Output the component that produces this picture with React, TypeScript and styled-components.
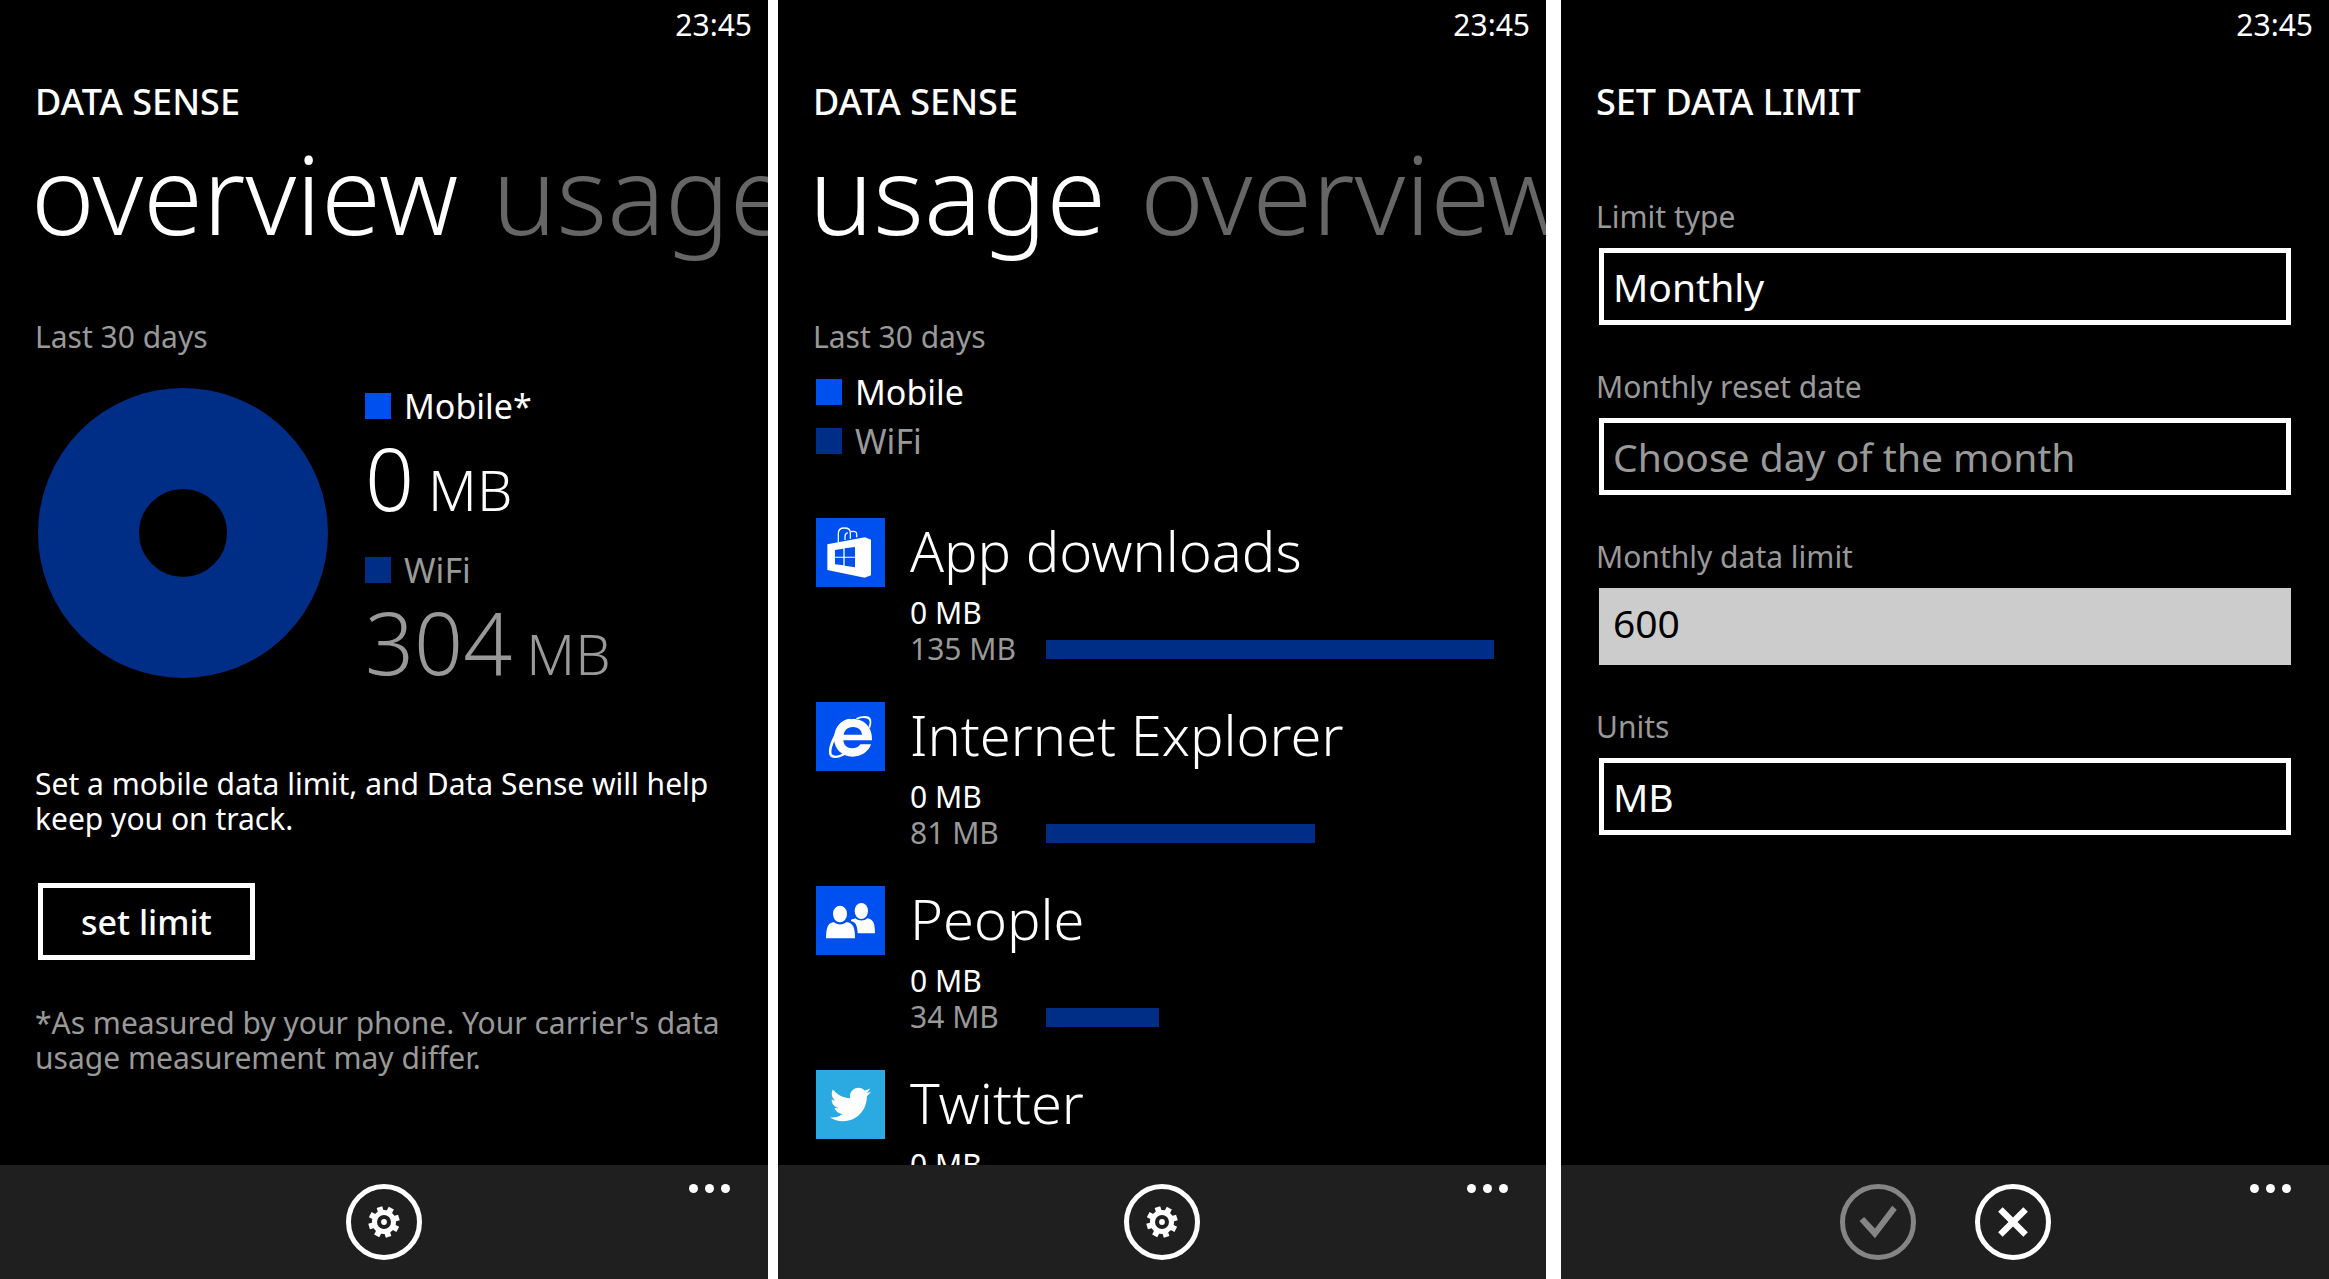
import React from 'react';
import styled, { createGlobalStyle } from 'styled-components';
import { FaTwitter } from 'react-icons/fa';

const GlobalStyle = createGlobalStyle`
  *, *::before, *::after { box-sizing: border-box; }
  html, body { margin: 0; padding: 0; background: #fff; }
  body { font-family: 'Noto Sans', 'Open Sans', sans-serif; color: #fff; }
  h1, h2, h3, p, ul, dl, dd, dt { margin: 0; padding: 0; font-weight: 400; }
  button, input, select { font-family: inherit; color: inherit; }
`;

const color = {
  text: '#ffffff',
  subtle: '#999999',
  faded: '#666666',
  accent: '#0050ef',
  accentDark: '#002d86',
  twitter: '#2ba9e1',
  bar: '#1f1f1f',
  field: '#cccccc',
};

/* ---------- page and phone ---------- */

const Page = styled.main`
  display: grid;
  grid-template-columns: 1fr 10px 1fr 15px 1fr;
  height: 100vh;
`;

const Phone = styled.section<{ $column: number }>`
  grid-column: ${(p) => p.$column};
  display: flex;
  flex-direction: column;
  min-width: 0;
  min-height: 0;
  overflow: hidden;
  background: #000;
`;

const Status = styled.div`
  flex: none;
  padding-right: 16px;
  text-align: right;
  font-size: 30px;
  line-height: 50px;
`;

const Content = styled.div`
  flex: 1;
  min-height: 0;
  overflow: hidden;
  padding: 28px 0 0 35px;
`;

const Title = styled.h1`
  font-size: 36px;
  line-height: 48px;
  font-weight: 500;
`;

const Pivot = styled.nav`
  display: flex;
  gap: 34px;
  margin: 8px 0 65px -4px;
`;

const PivotItem = styled.button<{ $active?: boolean }>`
  flex: none;
  padding: 0;
  border: 0;
  background: none;
  font-size: 108px;
  line-height: 120px;
  font-weight: 350;
  color: ${(p) => (p.$active ? color.text : color.faded)};
`;

const Text = styled.p<{ $subtle?: boolean }>`
  font-size: 30px;
  line-height: 35px;
  color: ${(p) => (p.$subtle ? color.subtle : color.text)};
`;

const Period = styled(Text)`
  line-height: 36px;
`;

/* ---------- app bar ---------- */

const Bar = styled.footer`
  flex: none;
  display: grid;
  grid-template-columns: 1fr auto 1fr;
  height: 114px;
  padding: 19px 38px;
  background: ${color.bar};
`;

const BarActions = styled.div`
  grid-column: 2;
  display: flex;
  gap: 59px;
`;

const RoundButton = styled.button`
  display: flex;
  align-items: center;
  justify-content: center;
  width: 76px;
  height: 76px;
  padding: 0;
  border: 5px solid currentColor;
  border-radius: 50%;
  background: none;
  color: #fff;

  &:disabled { color: #858585; }
`;

const MoreButton = styled.button`
  justify-self: end;
  align-self: start;
  display: flex;
  gap: 7px;
  padding: 0;
  border: 0;
  background: none;
`;

const Dot = styled.span`
  width: 9px;
  height: 9px;
  border-radius: 50%;
  background: #fff;
`;

function AppBar({ children }: { children: React.ReactNode }) {
  return (
    <Bar>
      <BarActions>{children}</BarActions>
      <MoreButton type="button" aria-label="More">
        <Dot />
        <Dot />
        <Dot />
      </MoreButton>
    </Bar>
  );
}

function GearIcon() {
  return (
    <svg width="34" height="34" viewBox="-17 -17 34 34" fill="none" stroke="#fff" aria-hidden="true">
      <circle r="9.5" strokeWidth="5" />
      {[0, 1, 2, 3, 4, 5, 6, 7].map((n) => (
        <line key={n} x1="10" x2="15.6" y1="0" y2="0" strokeWidth="5.8" transform={`rotate(${n * 45 - 17})`} />
      ))}
      <circle r="2.9" fill="#fff" stroke="none" />
    </svg>
  );
}

function CheckIcon() {
  return (
    <svg width="40" height="40" viewBox="-20 -20 40 40" fill="currentColor" aria-hidden="true">
      <path d="M-18.5-1-13.9-5-3 6.5 14.2-16.3 18.8-12.3-3 16.3Z" />
    </svg>
  );
}

function CloseIcon() {
  return (
    <svg width="40" height="40" viewBox="-20 -20 40 40" stroke="currentColor" strokeWidth="6.4" aria-hidden="true">
      <path d="M-12.6-12.6 12.6 12.6M12.6-12.6-12.6 12.6" />
    </svg>
  );
}

const SettingsButton = () => (
  <RoundButton type="button" aria-label="Settings">
    <GearIcon />
  </RoundButton>
);

/* ---------- legend ---------- */

const Legend = styled.div<{ $subtle?: boolean }>`
  display: flex;
  align-items: center;
  gap: 13px;
  font-size: 34px;
  line-height: 36px;
  color: ${(p) => (p.$subtle ? color.subtle : color.text)};
`;

const Swatch = styled.span<{ $dark?: boolean }>`
  width: 26px;
  height: 26px;
  background: ${(p) => (p.$dark ? color.accentDark : color.accent)};
`;

/* ---------- overview ---------- */

const Summary = styled.div`
  display: flex;
  gap: 37px;
  margin: 33px 0 82px;
  padding-left: 3px;
`;

const Totals = styled.div`
  display: flex;
  flex-direction: column;
  gap: 32px;
`;

const Amount = styled.p<{ $subtle?: boolean }>`
  margin-top: 12px;
  font-size: 86px;
  line-height: 84px;
  font-weight: 300;
  white-space: nowrap;
  color: ${(p) => (p.$subtle ? color.subtle : color.text)};
`;

const Unit = styled.span`
  margin-left: 14px;
  font-size: 56px;
  line-height: 1;
`;

const OutlineButton = styled.button`
  display: block;
  height: 77px;
  margin: 47px 0 45px 3px;
  padding: 0 38px;
  border: 5px solid #fff;
  background: none;
  font-size: 34px;
  font-weight: 500;
`;

function Overview() {
  return (
    <Phone $column={1}>
      <Status>23:45</Status>
      <Content>
        <Title>DATA SENSE</Title>
        <Pivot>
          <PivotItem type="button" $active>overview</PivotItem>
          <PivotItem type="button">usage</PivotItem>
        </Pivot>
        <Period $subtle>Last 30 days</Period>
        <Summary>
          <svg width="290" height="290" viewBox="0 0 290 290" role="img" aria-label="All data was used over WiFi">
            <circle cx="145" cy="145" r="94.5" fill="none" stroke={color.accentDark} strokeWidth="101" />
          </svg>
          <Totals>
            <div>
              <Legend><Swatch />Mobile*</Legend>
              <Amount>0<Unit>MB</Unit></Amount>
            </div>
            <div>
              <Legend $subtle><Swatch $dark />WiFi</Legend>
              <Amount $subtle>304<Unit>MB</Unit></Amount>
            </div>
          </Totals>
        </Summary>
        <Text>
          Set a mobile data limit, and Data Sense will help<br />keep you on track.
        </Text>
        <OutlineButton type="button">set limit</OutlineButton>
        <Text $subtle>
          *As measured by your phone. Your carrier's data<br />usage measurement may differ.
        </Text>
      </Content>
      <AppBar><SettingsButton /></AppBar>
    </Phone>
  );
}

/* ---------- usage ---------- */

const Legends = styled.div`
  display: flex;
  flex-direction: column;
  gap: 13px;
  margin: 19px 0 59px;
  padding-left: 3px;
`;

const AppList = styled.ul`
  display: flex;
  flex-direction: column;
  gap: 35px;
  padding: 0 52px 0 3px;
  list-style: none;
`;

const AppRow = styled.li`
  display: flex;
  gap: 25px;
`;

const Tile = styled.div<{ $color?: string }>`
  flex: none;
  display: flex;
  align-items: center;
  justify-content: center;
  width: 69px;
  height: 69px;
  background: ${(p) => p.$color || color.accent};
`;

const AppInfo = styled.div`
  flex: 1;
  min-width: 0;
`;

const AppName = styled.h2`
  margin-bottom: 13px;
  font-size: 56px;
  line-height: 64px;
  font-weight: 300;
`;

const Usage = styled.div<{ $subtle?: boolean }>`
  display: grid;
  grid-template-columns: 136px 1fr;
  align-items: center;
  font-size: 30px;
  line-height: 36px;
  color: ${(p) => (p.$subtle ? color.subtle : color.text)};
`;

const UsageBar = styled.span`
  height: 19px;
  background: ${color.accentDark};
`;

function StoreIcon() {
  return (
    <svg width="69" height="69" viewBox="0 0 207 207" fill="none" aria-hidden="true">
      <path d="M67 72V46C67 34 76 30 85 30S103 34 103 44V62M87 66V56C87 50 90 46 95 44M105 41C114 39 122 41 122 47V58" stroke="#fff" strokeWidth="3.8" />
      <path d="M34 79 147 58 165 65V172L146 179 34 156Z" fill="#fff" />
      <path d="M57 96 82 92V116H57ZM86 91 117 87V116H86ZM57 119H82V142L57 139ZM86 119H117V148L86 143Z" fill={color.accent} />
    </svg>
  );
}

function ExplorerIcon() {
  return (
    <svg width="69" height="69" viewBox="0 0 207 207" fill="#fff" aria-hidden="true">
      <path fillRule="evenodd" d="M168 115H82C83 130 94 139 108 139C120 139 128 135 133 127H165C158 149 136 164 110 164C78 164 54 141 54 109C54 76 79 51 111 51C145 51 170 76 168 115ZM83 98H138C137 84 126 75 111 75C96 75 85 84 83 98Z" />
      <path d="M119 49C142 38 161 40 165 52C167 61 166 69 162 79L158 74C161 65 162 59 159 54C154 46 139 46 124 52Z" />
      <path d="M59 92C41 121 34 149 42 162C50 173 73 168 98 152L88 150C70 162 54 164 48 157C43 148 49 127 62 104Z" />
      <path d="M57 90C67 72 83 60 107 53L100 50C80 53 63 68 57 90Z" />
    </svg>
  );
}

function PeopleIcon() {
  return (
    <svg width="69" height="69" viewBox="0 0 207 207" fill="#fff" aria-hidden="true">
      <ellipse cx="136" cy="75" rx="20" ry="24" />
      <path d="M105 101C110 99 115 99 118 97C128 106 145 106 154 97C171 101 177 109 177 142H125C124 118 118 107 105 106Z" />
      <ellipse cx="72" cy="84" rx="21" ry="25" />
      <path d="M30 157C31 124 35 112 53 108C64 118 81 118 92 108C111 112 117 122 117 157Z" />
    </svg>
  );
}

const peak = 135;

const apps = [
  { name: 'App downloads', wifi: 135, icon: <StoreIcon /> },
  { name: 'Internet Explorer', wifi: 81, icon: <ExplorerIcon /> },
  { name: 'People', wifi: 34, icon: <PeopleIcon /> },
  { name: 'Twitter', wifi: 0, icon: <FaTwitter size={41} color="#fff" />, tile: color.twitter },
];

function UsageScreen() {
  return (
    <Phone $column={3}>
      <Status>23:45</Status>
      <Content>
        <Title>DATA SENSE</Title>
        <Pivot>
          <PivotItem type="button" $active>usage</PivotItem>
          <PivotItem type="button">overview</PivotItem>
        </Pivot>
        <Period $subtle>Last 30 days</Period>
        <Legends>
          <Legend><Swatch />Mobile</Legend>
          <Legend $subtle><Swatch $dark />WiFi</Legend>
        </Legends>
        <AppList>
          {apps.map((app) => (
            <AppRow key={app.name}>
              <Tile $color={app.tile}>{app.icon}</Tile>
              <AppInfo>
                <AppName>{app.name}</AppName>
                <Usage>0 MB</Usage>
                {app.wifi > 0 && (
                  <Usage $subtle>
                    {app.wifi} MB
                    <UsageBar style={{ width: `${(app.wifi / peak) * 100}%` }} />
                  </Usage>
                )}
              </AppInfo>
            </AppRow>
          ))}
        </AppList>
      </Content>
      <AppBar><SettingsButton /></AppBar>
    </Phone>
  );
}

/* ---------- set data limit ---------- */

const Form = styled.form`
  display: flex;
  flex-direction: column;
  gap: 44px;
  margin-top: 73px;
  padding-right: 38px;
`;

const Field = styled.div`
  display: flex;
  flex-direction: column;
  gap: 13px;
`;

const Label = styled.label`
  font-size: 30px;
  line-height: 36px;
  color: ${color.subtle};
`;

const Picker = styled.select<{ $placeholder?: boolean }>`
  appearance: none;
  height: 77px;
  margin-left: 3px;
  padding: 0 9px;
  border: 5px solid #fff;
  border-radius: 0;
  background: #000;
  font-size: 39px;
  color: ${(p) => (p.$placeholder ? color.subtle : color.text)};
`;

const TextBox = styled.input`
  height: 77px;
  margin-left: 3px;
  padding: 0 14px 8px;
  border: 0;
  border-radius: 0;
  background: ${color.field};
  font-size: 39px;
  color: #000;
`;

function LimitScreen() {
  return (
    <Phone $column={5}>
      <Status>23:45</Status>
      <Content>
        <Title>SET DATA LIMIT</Title>
        <Form>
          <Field>
            <Label htmlFor="type">Limit type</Label>
            <Picker id="type"><option>Monthly</option></Picker>
          </Field>
          <Field>
            <Label htmlFor="reset">Monthly reset date</Label>
            <Picker id="reset" $placeholder><option>Choose day of the month</option></Picker>
          </Field>
          <Field>
            <Label htmlFor="limit">Monthly data limit</Label>
            <TextBox id="limit" type="text" inputMode="numeric" defaultValue="600" />
          </Field>
          <Field>
            <Label htmlFor="units">Units</Label>
            <Picker id="units"><option>MB</option></Picker>
          </Field>
        </Form>
      </Content>
      <AppBar>
        <RoundButton type="button" aria-label="Save" disabled><CheckIcon /></RoundButton>
        <RoundButton type="button" aria-label="Cancel"><CloseIcon /></RoundButton>
      </AppBar>
    </Phone>
  );
}

export default function App() {
  return (
    <>
      <GlobalStyle />
      <Page>
        <Overview />
        <UsageScreen />
        <LimitScreen />
      </Page>
    </>
  );
}
